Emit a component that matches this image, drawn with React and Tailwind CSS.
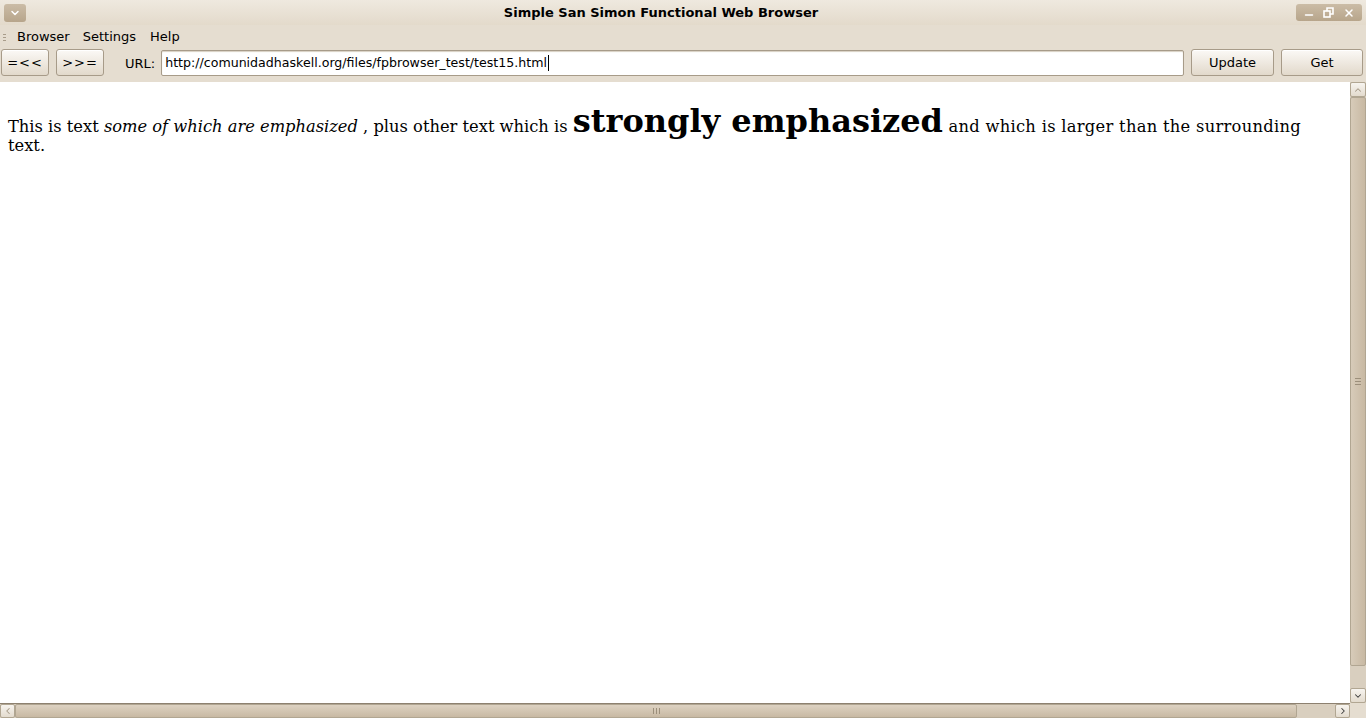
import { ChevronDown, ChevronUp, ChevronLeft, ChevronRight, X, Minus } from 'lucide-react';

function GtkButton({ children, className = '' }) {
  return (
    <button
      className={`flex items-center justify-center rounded-[3px] border border-[#a79b89] bg-gradient-to-b from-[#fbf9f6] to-[#e2d9cb] text-[13px] text-black shadow-[inset_0_1px_0_#ffffff] ${className}`}
    >
      {children}
    </button>
  );
}

function RestoreIcon() {
  return (
    <svg width="11" height="11" viewBox="0 0 11 11" fill="none" stroke="#ffffff" strokeWidth="1.6">
      <rect x="1" y="4" width="6" height="6" />
      <path d="M4 4V1h6v6H7" />
    </svg>
  );
}

export default function App() {
  return (
    <div className="flex h-[718px] w-[1366px] flex-col overflow-hidden bg-[#e5ddd0] font-['DejaVu_Sans',sans-serif] text-black">
      {/* title bar */}
      <div className="flex h-[25px] items-center bg-gradient-to-b from-[#efe9df] to-[#e3dacb] px-[4px]">
        <div className="flex h-[18px] w-[22px] items-center justify-center rounded-[3px] bg-gradient-to-b from-[#cbbca6] to-[#b7a58b]">
          <ChevronDown size={12} strokeWidth={3} color="#ffffff" />
        </div>
        <div className="flex-1 text-center text-[13px] font-bold">Simple San Simon Functional Web Browser</div>
        <div className="flex h-[17px] w-[66px] items-center justify-around rounded-[3px] bg-gradient-to-b from-[#cbbca6] to-[#b7a58b] px-[3px]">
          <Minus size={12} strokeWidth={3} color="#ffffff" className="mt-[5px]" />
          <RestoreIcon />
          <X size={12} strokeWidth={3} color="#ffffff" />
        </div>
      </div>

      {/* menu bar */}
      <div className="flex h-[22px] items-center pt-[2px] text-[13px]">
        <div className="ml-[3px] flex w-[4px] flex-col gap-[2px]">
          <span className="h-[1px] w-[3px] bg-[#a89c8a]" />
          <span className="h-[1px] w-[3px] bg-[#a89c8a]" />
          <span className="h-[1px] w-[3px] bg-[#a89c8a]" />
        </div>
        <span className="ml-[10px]">Browser</span>
        <span className="ml-[13px]">Settings</span>
        <span className="ml-[14px]">Help</span>
      </div>

      {/* toolbar */}
      <div className="flex h-[35px] items-start pl-[1px] pr-[3px] pt-[2px]">
        <GtkButton className="h-[27px] w-[48px] tracking-[1px]">=&lt;&lt;</GtkButton>
        <GtkButton className="ml-[7px] h-[27px] w-[48px] tracking-[1px]">&gt;&gt;=</GtkButton>
        <span className="ml-[21px] mt-[5px] text-[13px]">URL:</span>
        <div className="ml-[6px] mt-[1px] flex h-[26px] flex-1 items-center rounded-[2px] border border-[#a79b89] bg-white px-[3px] text-[12.6px] shadow-[inset_0_1px_1px_#d8d0c3]">
          http://comunidadhaskell.org/files/fpbrowser_test/test15.html
          <span className="ml-[1px] h-[16px] w-[1px] bg-black" />
        </div>
        <GtkButton className="ml-[7px] h-[27px] w-[83px]">Update</GtkButton>
        <GtkButton className="ml-[7px] h-[27px] w-[82px]">Get</GtkButton>
      </div>

      {/* content + scrollbars */}
      <div className="flex min-h-0 flex-1 flex-col">
        <div className="flex min-h-0 flex-1">
          <div className="flex-1 bg-white pl-[8px] pr-[30px] pt-[30px] font-['DejaVu_Serif',serif] text-[16.3px] leading-[19px]">
            <p>
              <span>This is text </span>
              <em>some of which are emphasized</em>
              <span> , plus other text which is </span>
              <strong className="text-[32px] leading-[19px]">strongly emphasized</strong>
              <span className="tracking-[0.3px]"> and which is larger than the surrounding </span>
              <span>text.</span>
            </p>
          </div>
          <div className="flex w-[16px] flex-col bg-[#d9cfbf]">
            <div className="flex h-[15px] items-center justify-center rounded-[2px] border border-[#b1a692] bg-gradient-to-b from-[#f7f4ef] to-[#e3dbce]">
              <ChevronUp size={10} strokeWidth={2.5} color="#a69a88" />
            </div>
            <div className="flex flex-1 items-center justify-center rounded-[2px] border border-[#b1a692] bg-gradient-to-r from-[#d7cbb9] to-[#c8b9a3]">
              <div className="flex flex-col gap-[2px]">
                <span className="h-[1px] w-[6px] bg-[#9c8f7b]" />
                <span className="h-[1px] w-[6px] bg-[#9c8f7b]" />
                <span className="h-[1px] w-[6px] bg-[#9c8f7b]" />
              </div>
            </div>
            <div className="h-[22px]" />
            <div className="flex h-[15px] items-center justify-center rounded-[2px] border border-[#b1a692] bg-gradient-to-b from-[#f7f4ef] to-[#e3dbce]">
              <ChevronDown size={10} strokeWidth={2.5} color="#3a3a3a" />
            </div>
          </div>
        </div>
        <div className="flex h-[15px]">
          <div className="flex flex-1 border-t border-[#8d8170] bg-[#d9cfbf]">
            <div className="flex w-[15px] items-center justify-center rounded-[2px] border border-[#b1a692] bg-gradient-to-b from-[#f7f4ef] to-[#e3dbce]">
              <ChevronLeft size={10} strokeWidth={2.5} color="#a69a88" />
            </div>
            <div className="flex w-[1282px] items-center justify-center rounded-[2px] border border-[#b1a692] bg-gradient-to-b from-[#ddd2c2] to-[#c8b9a3]">
              <div className="flex gap-[2px]">
                <span className="h-[6px] w-[1px] bg-[#9c8f7b]" />
                <span className="h-[6px] w-[1px] bg-[#9c8f7b]" />
                <span className="h-[6px] w-[1px] bg-[#9c8f7b]" />
              </div>
            </div>
            <div className="flex-1" />
            <div className="flex w-[15px] items-center justify-center rounded-[2px] border border-[#b1a692] bg-gradient-to-b from-[#f7f4ef] to-[#e3dbce]">
              <ChevronRight size={10} strokeWidth={2.5} color="#3a3a3a" />
            </div>
          </div>
          <div className="w-[16px] bg-[#e5ddd0]" />
        </div>
      </div>
    </div>
  );
}
